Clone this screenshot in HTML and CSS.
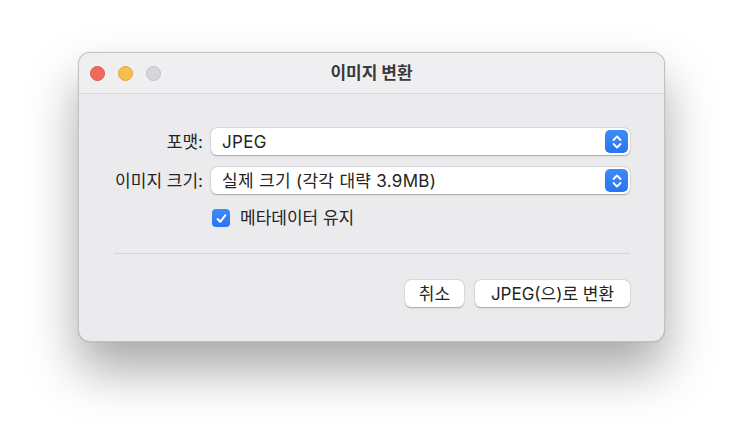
FILE: index.html
```html
<!DOCTYPE html>
<html lang="ko">
<head>
<meta charset="utf-8">
<title>이미지 변환</title>
<link rel="stylesheet" href="styles.css">
</head>
<body>
<div class="window">
  <div class="titlebar">
    <div class="lights">
      <span class="light red"></span>
      <span class="light yellow"></span>
      <span class="light gray"></span>
    </div>
    <div class="title">이미지 변환</div>
  </div>
  <div class="content">
    <div class="form">
      <label class="label">포맷:</label>
      <div class="popup">
        <span class="popup-text">JPEG</span>
        <span class="stepper"><svg width="12" height="16" viewBox="0 0 12 16"><path d="M2.5 6 L6 2.5 L9.5 6 M2.5 10 L6 13.5 L9.5 10" fill="none" stroke="#fff" stroke-width="1.8" stroke-linecap="round" stroke-linejoin="round"/></svg></span>
      </div>
      <label class="label">이미지 크기:</label>
      <div class="popup">
        <span class="popup-text">실제 크기 (각각 대략 3.9MB)</span>
        <span class="stepper"><svg width="12" height="16" viewBox="0 0 12 16"><path d="M2.5 6 L6 2.5 L9.5 6 M2.5 10 L6 13.5 L9.5 10" fill="none" stroke="#fff" stroke-width="1.8" stroke-linecap="round" stroke-linejoin="round"/></svg></span>
      </div>
      <span></span>
      <div class="check-row">
        <span class="checkbox"><svg width="13" height="13" viewBox="0 0 13 13"><path d="M2.6 7 L5.3 9.8 L10.4 3.2" fill="none" stroke="#fff" stroke-width="2" stroke-linecap="round" stroke-linejoin="round"/></svg></span>
        <span class="check-label">메타데이터 유지</span>
      </div>
    </div>
    <div class="separator"></div>
    <div class="buttons">
      <button class="btn btn-cancel">취소</button>
      <button class="btn btn-ok">JPEG(으)로 변환</button>
    </div>
  </div>
</div>
</body>
</html>
```
FILE: styles.css
```css
html, body {
  margin: 0;
  padding: 0;
  background: #ffffff;
}
body {
  width: 743px;
  height: 446px;
  overflow: hidden;
  padding: 52px 0 0 78px;
  box-sizing: border-box;
  font-family: "Inter", "Noto Sans CJK KR", sans-serif;
  color: #242424;
}
.window {
  width: 587px;
  height: 290px;
  box-sizing: border-box;
  border-radius: 12px;
  background: #ebebed;
  border: 1px solid #c2c2c4;
  box-shadow: 0 28px 50px rgba(0,0,0,0.34), 0 0 1px rgba(0,0,0,0.3);
  overflow: hidden;
  display: flex;
  flex-direction: column;
}
.titlebar {
  height: 40px;
  flex: none;
  background: #efeff1;
  border-bottom: 1px solid #d8d8da;
  display: flex;
  align-items: center;
  position: relative;
}
.lights {
  display: flex;
  gap: 13px;
  padding-left: 11px;
}
.light {
  width: 15px;
  height: 15px;
  border-radius: 50%;
  box-sizing: border-box;
}
.red { background: #ee6a5f; border: 0.5px solid #d9574d; }
.yellow { background: #f5bf4f; border: 0.5px solid #dca63c; }
.gray { background: #d6d6d8; border: 0.5px solid #c3c3c5; }
.title {
  position: absolute;
  left: 0;
  right: 0;
  text-align: center;
  font-weight: 700;
  font-size: 17px;
  line-height: 20px;
  color: #3a3a3a;
  pointer-events: none;
}
.content {
  padding: 34px 34px 0 34px;
  display: flex;
  flex-direction: column;
}
.form {
  display: grid;
  grid-template-columns: 90px 419px;
  column-gap: 8px;
  row-gap: 12px;
  align-items: center;
}
.label {
  text-align: right;
  font-size: 17px;
  line-height: 20px;
  white-space: nowrap;
}
.popup {
  height: 27px;
  box-sizing: border-box;
  background: #ffffff;
  border-radius: 6px;
  box-shadow: 0 0.5px 1.5px rgba(0,0,0,0.28), 0 0 0 0.5px rgba(0,0,0,0.06);
  display: flex;
  align-items: center;
  justify-content: space-between;
  padding: 0 2px 0 11px;
}
.popup-text {
  font-size: 17px;
  line-height: 20px;
  letter-spacing: 0.3px;
}
.stepper {
  width: 23px;
  height: 23px;
  border-radius: 5px;
  background: linear-gradient(#3d8bf7, #2a74f0);
  display: flex;
  align-items: center;
  justify-content: center;
}
.check-row {
  height: 18px;
  display: flex;
  align-items: center;
  gap: 10px;
  margin-top: 3px;
  padding-left: 1px;
}
.checkbox {
  flex: none;
  width: 18px;
  height: 18px;
  border-radius: 4px;
  background: linear-gradient(#3d8bf7, #2a74f0);
  display: flex;
  align-items: center;
  justify-content: center;
}
.check-label {
  font-size: 17px;
  line-height: 20px;
  white-space: nowrap;
}
.separator {
  height: 1px;
  background: #d4d4d6;
  margin-top: 26px;
  margin-left: 1px;
}
.buttons {
  display: flex;
  justify-content: flex-end;
  gap: 11px;
  margin-top: 26px;
}
.btn {
  height: 27px;
  border: none;
  border-radius: 6px;
  background: #ffffff;
  box-shadow: 0 0.5px 1.5px rgba(0,0,0,0.28), 0 0 0 0.5px rgba(0,0,0,0.06);
  font-family: "Inter", "Noto Sans CJK KR", sans-serif;
  font-size: 17px;
  line-height: 20px;
  color: #242424;
  padding: 0;
}
.btn-cancel { width: 59px; }
.btn-ok { width: 155px; }
```
